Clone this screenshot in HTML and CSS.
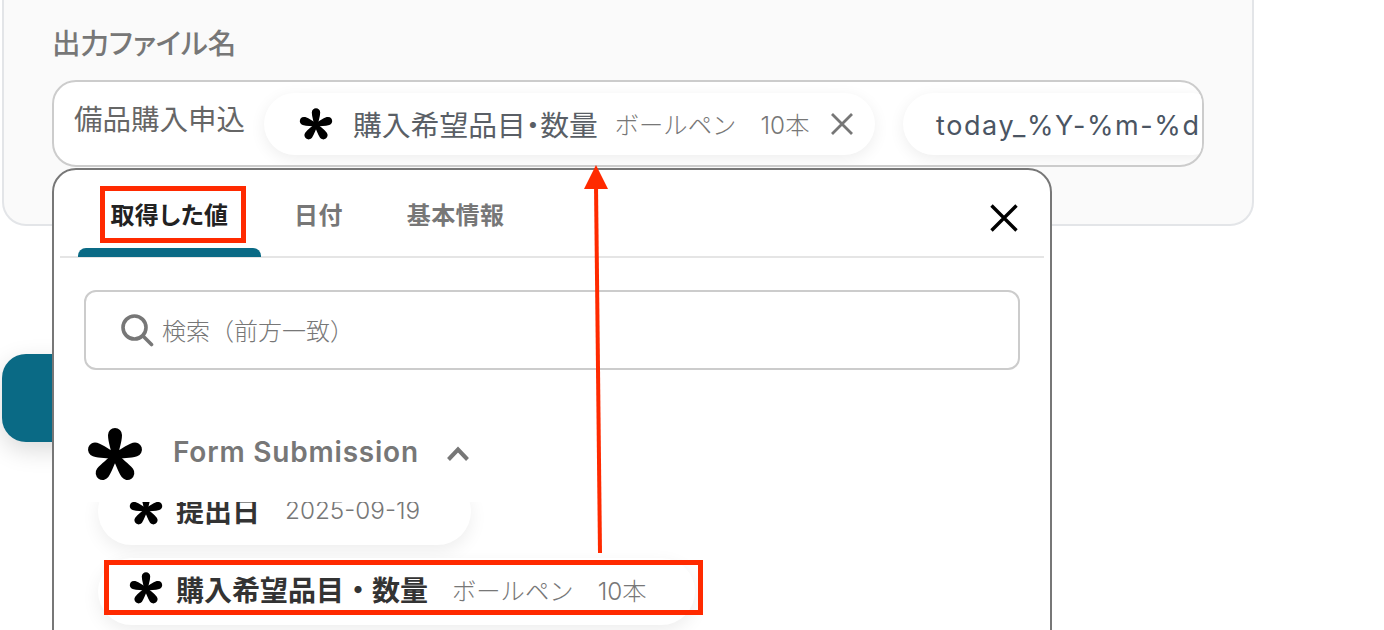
FILE: index.html
```html
<!DOCTYPE html>
<html lang="ja">
<head>
<meta charset="utf-8">
<title>出力ファイル名</title>
<link rel="stylesheet" href="styles.css">
</head>
<body>
<svg class="defs" width="0" height="0" aria-hidden="true">
  <symbol id="aster" viewBox="-30 -30 60 60">
    <g id="asterg">
      <circle r="5.500"/>
      <path id="petal" d="M-3.500 0C-3.500-6-7-14-7-21A7 7 0 0 1 7-21C7-14 3.500-6 3.500 0Z"/>
      <use href="#petal" transform="rotate(72)"/>
      <use href="#petal" transform="rotate(144)"/>
      <use href="#petal" transform="rotate(216)"/>
      <use href="#petal" transform="rotate(288)"/>
    </g>
  </symbol>
</svg>

<main class="page">
  <section class="panel">
    <h2 class="panel-label">出力ファイル名</h2>
    <div class="field">
      <span class="field-text">備品購入申込</span>
      <div class="chip chip-main">
        <svg class="icon-aster-md"><use href="#aster"/></svg>
        <span class="chip-name">購入希望品目・数量</span>
        <span class="chip-value">ボールペン　10本</span>
        <svg class="icon-x-gray" viewBox="0 0 24 24"><path d="M2 2L22 22M22 2L2 22"/></svg>
      </div>
      <div class="chip chip-date">today_%Y-%m-%d</div>
    </div>
  </section>
  <div class="teal-button"></div>
</main>

<div class="dropdown">
  <div class="tabs">
    <div class="tab tab-active">取得した値</div>
    <div class="tab">日付</div>
    <div class="tab">基本情報</div>
    <svg class="icon-close" viewBox="0 0 28 28"><path d="M1.500 1.500L26.500 26.500M26.500 1.500L1.500 26.500"/></svg>
  </div>
  <div class="search">
    <svg class="icon-search" viewBox="0 0 34 34"><circle cx="14.500" cy="14.500" r="11.500"/><path d="M23 23L31.500 31.500"/></svg>
    <span class="search-text">検索（前方一致）</span>
  </div>
  <div class="group-head">
    <svg class="icon-aster-lg"><use href="#aster"/></svg>
    <span class="group-name">Form Submission</span>
    <svg class="icon-chevron" viewBox="0 0 24 16"><path d="M2.500 13.500L12 3.500L21.500 13.500"/></svg>
  </div>
  <div class="list">
    <div class="item item-date">
      <svg class="icon-aster-sm"><use href="#aster"/></svg>
      <span class="item-name">提出日</span>
      <span class="item-value">2025-09-19</span>
    </div>
    <div class="item item-goods">
      <svg class="icon-aster-sm"><use href="#aster"/></svg>
      <span class="item-name">購入希望品目・数量</span>
      <span class="item-value">ボールペン　10本</span>
    </div>
  </div>
</div>

<div class="mark mark-tab"></div>
<div class="mark mark-item"></div>
<svg class="arrow" viewBox="0 0 40 400" width="40" height="400">
  <path class="arrow-line" d="M24 390L20 22"/>
  <path class="arrow-head" d="M20 2L32 26H8Z"/>
</svg>
</body>
</html>
```
FILE: styles.css
```css
* { box-sizing: border-box; }
html, body { margin: 0; height: 630px; overflow: hidden; background: #fff; }
body {
  position: relative;
  font-family: Inter, "Noto Sans CJK JP", sans-serif;
  color: #777;
}
.defs { position: absolute; }

.page { display: flex; flex-direction: column; align-items: flex-start; padding-left: 2px; }
.panel {
  width: 1252px;
  height: 258px;
  margin-top: -32px;
  padding: 56px 48px 0 48px;
  background: #fafafa;
  border: 2px solid #e3e5e8;
  border-radius: 24px;
}
.panel-label {
  margin: 0;
  height: 36px;
  font-size: 28.500px;
  line-height: 36px;
  font-weight: 500;
  color: #777;
  font-feature-settings: "palt";
}
.field {
  display: flex;
  align-items: center;
  width: 1152px;
  height: 87px;
  margin-top: 18px;
  padding-left: 20px;
  background: #fff;
  border: 2px solid #ccc;
  border-radius: 24px;
  overflow: hidden;
}
.field-text {
  flex: none;
  width: 190px;
  margin-top: -8px;
  font-size: 28.500px;
  line-height: 40px;
  color: #666;
}
.chip {
  flex: none;
  display: flex;
  align-items: center;
  height: 62px;
  background: #fff;
  border-radius: 31px;
  box-shadow: 0 4px 16px rgba(0, 0, 0, .07);
}
.chip-main { width: 611px; padding-left: 34px; }
.icon-aster-md { width: 36px; height: 36px; margin-top: 3px; flex: none; }
.chip-name {
  margin-left: 19px;
  font-size: 28.800px;
  color: #5a5f66;
  font-feature-settings: "palt";
  white-space: nowrap;
}
.chip-value {
  margin-left: 17px;
  font-size: 24.300px;
  font-weight: 300;
  color: #777;
  white-space: nowrap;
}
.icon-x-gray { width: 24px; height: 24px; margin-left: 21px; flex: none; }
.icon-x-gray path { fill: none; stroke: #777; stroke-width: 2.800; }
.chip-date {
  width: 320px;
  margin-left: 28px;
  padding: 3px 0 0 33px;
  font-size: 27px;
  letter-spacing: 1.600px;
  color: #4b5563;
  white-space: nowrap;
}

.teal-button {
  width: 100px;
  height: 88px;
  margin-top: 128px;
  background: #0a6a85;
  border-radius: 24px;
  box-shadow: 0 8px 24px rgba(0, 0, 0, .15);
}

.dropdown {
  position: absolute;
  left: 52px;
  top: 168px;
  width: 1000px;
  height: 520px;
  background: #fff;
  border: 2px solid #777;
  border-radius: 24px;
}
.tabs {
  display: flex;
  align-items: flex-start;
  height: 88px;
  margin: 0 6px;
  padding: 0 0 0 18px;
  border-bottom: 2px solid #e5e5e5;
}
.tab {
  height: 78px;
  padding: 29px 31px 0 33px;
  font-size: 24px;
  line-height: 34px;
  font-weight: 700;
  letter-spacing: .4px;
  color: #777;
  font-feature-settings: "palt";
  white-space: nowrap;
}
.tab-active {
  display: flex;
  flex-direction: column;
  align-items: center;
  height: 87px;
  width: 183px;
  padding: 29px 0 0;
  color: #222;
}
.tab-active::after {
  content: "";
  width: 100%;
  height: 9px;
  margin-top: auto;
  background: #0a6a85;
  border-radius: 8px 8px 0 0;
}
.icon-close { width: 28px; height: 28px; margin: 34px 26px 0 auto; flex: none; }
.icon-close path { fill: none; stroke: #000; stroke-width: 3.400; }

.search {
  display: flex;
  align-items: center;
  width: 936px;
  height: 80px;
  margin: 32px 0 0 30px;
  padding-left: 34px;
  border: 2px solid #ccc;
  border-radius: 12px;
}
.icon-search { width: 34px; height: 34px; flex: none; }
.icon-search circle, .icon-search path { fill: none; stroke: #777; stroke-width: 3.600; stroke-linecap: round; }
.search-text { margin: -2px 0 0 8px; font-size: 24px; font-weight: 300; color: #777; }

.group-head {
  display: flex;
  align-items: center;
  height: 60px;
  margin: 52px 0 0 32px;
}
.icon-aster-lg { width: 60px; height: 60px; flex: none; margin: 8px 1px 0 -1px; }
.group-name {
  margin-left: 27px;
  font-size: 28px;
  font-weight: 600;
  letter-spacing: .800px;
  color: #777;
}
.icon-chevron { width: 24px; height: 16px; margin: 4px 0 0 27px; flex: none; }
.icon-chevron path { fill: none; stroke: #777; stroke-width: 4; }

.list {
  height: 140px;
  margin-top: 20px;
  margin-left: -4px;
  padding: 0 0 30px 48px;
  overflow: hidden;
}
.item {
  display: flex;
  align-items: center;
  height: 67px;
  padding: 0 0 4px 30px;
  background: #fff;
  border-radius: 34px;
  box-shadow: 0 6px 18px rgba(0, 0, 0, .07);
}
.item-date { width: 373px; margin-top: -24px; }
.item-goods { width: 597px; margin-top: 13px; padding-bottom: 5px; }
.icon-aster-sm { width: 36px; height: 36px; flex: none; }
.item-name {
  margin-left: 12px;
  font-size: 28px;
  font-weight: 700;
  color: #333;
  white-space: nowrap;
}
.item-value {
  margin-left: 25px;
  font-size: 24.300px;
  font-weight: 300;
  color: #777;
  white-space: nowrap;
}
.item-goods .item-value { margin-left: 24px; }

.mark { position: absolute; border: 5px solid #ff2a00; }
.mark-tab { left: 100px; top: 186px; width: 146px; height: 57px; }
.mark-item { left: 104px; top: 560px; width: 599px; height: 55px; }
.arrow { position: absolute; left: 576px; top: 163px; }
.arrow-line { fill: none; stroke: #ff2a00; stroke-width: 4; }
.arrow-head { fill: #ff2a00; }
```
